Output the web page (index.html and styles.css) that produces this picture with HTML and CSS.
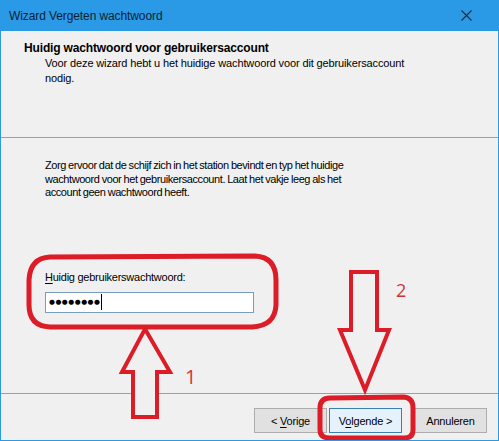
FILE: index.html
```html
<!DOCTYPE html>
<html lang="nl">
<head>
<meta charset="utf-8">
<title>Wizard Vergeten wachtwoord</title>
<link rel="stylesheet" href="styles.css">
</head>
<body>
<div class="window">
  <div class="titlebar">
    <span class="title">Wizard Vergeten wachtwoord</span>
    <svg class="close" width="11" height="11" viewBox="0 0 11 11"><path d="M0.5 0.5 L10.5 10.5 M10.5 0.5 L0.5 10.5" stroke="#1b2b3c" stroke-width="1.1" fill="none"/></svg>
  </div>
  <div class="header">
    <div class="h-title">Huidig wachtwoord voor gebruikersaccount</div>
    <div class="h-sub">Voor deze wizard hebt u het huidige wachtwoord voor dit gebruikersaccount<br>nodig.</div>
  </div>
  <div class="content">
    <p class="intro">Zorg ervoor dat de schijf zich in het station bevindt en typ het huidige<br>wachtwoord voor het gebruikersaccount. Laat het vakje leeg als het<br>account geen wachtwoord heeft.</p>
    <div class="field">
      <div class="label"><u>H</u>uidig gebruikerswachtwoord:</div>
      <div class="input"><span class="dots">●●●●●●●●</span><span class="caret"></span></div>
    </div>
  </div>
  <div class="footer">
    <div class="btn back"><span>&lt; <u>V</u>orige</span></div>
    <div class="btn next"><span>V<u>o</u>lgende &gt;</span></div>
    <div class="btn cancel"><span>Annuleren</span></div>
  </div>
  <svg class="annot" width="499" height="441" viewBox="0 0 499 441">
    <g fill="none" stroke="#dc1c26" stroke-width="5" stroke-linejoin="round">
      <path d="M50 257 L255 256 Q276 257 276 280 L276 305 Q275 326 252 327 L50 327 Q29 326 29 305 L29 280 Q30 258 50 257 Z"/>
      <path d="M330 398 L404 397 Q413 398 413 408 L413 430 Q413 438 404 438 L330 438 Q320 438 320 430 L320 408 Q320 398 330 398 Z"/>
    </g>
    <g fill="#f0f0f0" stroke="#dc1c26" stroke-width="4" stroke-linejoin="miter">
      <path d="M145 329 L170 372 L157 372 L157 417 L133 417 L133 372 L122 372 Z"/>
      <path d="M351 272 L377 272 L377 330 L389 330 L365 390 L340 330 L351 330 Z"/>
    </g>
    <text x="185" y="384" class="num n1">1</text>
    <text x="396" y="297" class="num n2">2</text>
  </svg>
</div>
</body>
</html>
```
FILE: styles.css
```css
* { box-sizing: border-box; }
html, body { margin: 0; padding: 0; background: #f0f0f0; }
body {
  font-family: "Liberation Sans", Arial, sans-serif;
  font-size: 11px;
  color: #000;
}
.window {
  position: relative;
  width: 499px;
  height: 441px;
  border: 1px solid #2b9ae6;
  border-top: 0;
  background: #f0f0f0;
  display: flex;
  flex-direction: column;
  overflow: hidden;
}
.titlebar {
  height: 31px;
  margin: 0 -1px;
  background: #2b9ae6;
  display: flex;
  align-items: center;
  justify-content: space-between;
  padding: 0 27px 0 9px;
  flex: none;
}
.title { color: #0d1f33; font-size: 12px; letter-spacing: -0.1px; }
.close { display: block; }
.header {
  height: 107px;
  flex: none;
  border-bottom: 1px solid #a0a0a0;
  padding: 10px 0 0 23px;
  background: #f0f0f0;
}
.h-title { font-weight: bold; font-size: 12px; letter-spacing: -0.15px; line-height: 15px; }
.h-sub { padding-left: 21px; line-height: 15px; font-size: 11px; letter-spacing: -0.13px; }
.content {
  flex: 1;
  padding: 21px 0 0 44px;
}
.intro {
  margin: 0;
  line-height: 13.5px;
  letter-spacing: -0.42px;
  word-spacing: -0.5px;
}
.field { margin-top: 70px; }
.label { line-height: 15px; letter-spacing: -0.25px; }
.label u, .btn u { text-decoration-thickness: 1px; text-underline-offset: 2px; }
.input {
  margin-top: 7px;
  width: 209px;
  height: 21px;
  border: 1px solid #7a9cc0;
  background: #fff;
  display: flex;
  align-items: center;
  padding-left: 3px;
}
.dots {
  font-family: "DejaVu Sans", sans-serif;
  font-size: 6.8px;
  letter-spacing: 0.5px;
  color: #000;
}
.caret {
  display: inline-block;
  width: 1px;
  height: 16px;
  background: #000;
  margin-left: 1px;
}
.footer {
  height: 47px;
  flex: none;
  border-top: 1px solid #a0a0a0;
  display: flex;
  justify-content: flex-end;
  align-items: flex-start;
  padding: 14px 11px 0 0;
}
.btn {
  width: 73px;
  height: 25px;
  border: 1px solid #adadad;
  background: #e1e1e1;
  display: flex;
  align-items: center;
  justify-content: center;
  font-size: 11px;
  letter-spacing: -0.2px;
}
.back { margin-right: 2px; }
.next { background: #e5f1fb; border-color: #3c7fb1; margin-right: 12px; }
.annot { position: absolute; left: -1px; top: 0; pointer-events: none; }
.num {
  font-family: "Open Sans", sans-serif;
  fill: #d0343a;
}
.n1 { font-size: 20px; }
.n2 { font-size: 18px; }
```
